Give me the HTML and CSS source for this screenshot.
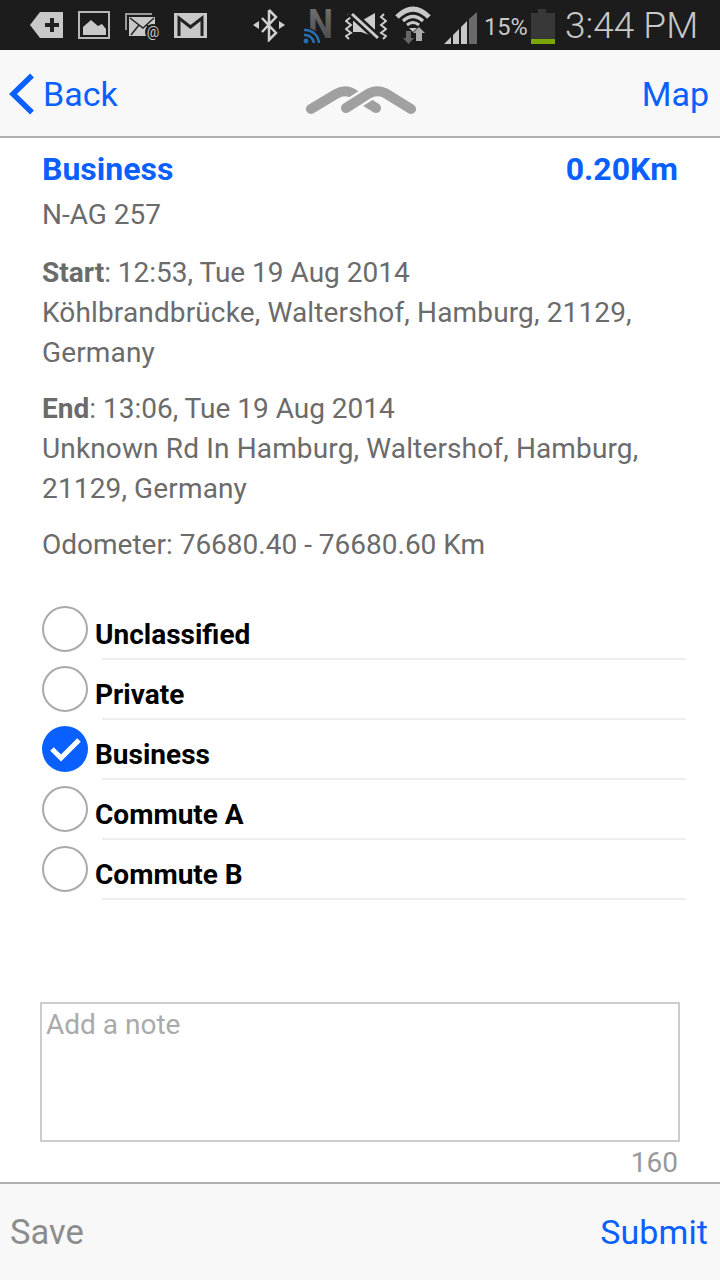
FILE: index.html
```html
<!DOCTYPE html>
<html lang="en">
<head>
    <meta charset="UTF-8">
    <title>Trip details</title>
    <link rel="stylesheet" href="styles.css">
</head>
<body>
    <!-- Status bar -->
    <div class="status-bar">
        <svg class="ic-tag" width="33" height="28" viewBox="0 0 33 28"><path fill="#c8c8c8" d="M0 14 10 1H33V27H10Z"/><path fill="#222" d="M15 12h5V7h4v5h5v4h-5v5h-4v-5h-5z"/></svg>
        <svg class="ic-image" width="32" height="28" viewBox="0 0 32 28"><rect x="1" y="1" width="30" height="26" fill="none" stroke="#b8b8b8" stroke-width="2"/><path fill="#c8c8c8" d="M5 24V16L13 9 20 15 24 13 28 18V24Z"/></svg>
        <svg class="ic-mail" width="36" height="30" viewBox="0 0 36 30">
            <path fill="none" stroke="#999" stroke-width="2" d="M1 20V4H27"/>
            <rect x="4" y="7" width="26" height="19" fill="#c8c8c8"/>
            <path fill="none" stroke="#222" stroke-width="1.500" d="M5 8 18 18 29 8M6 25 14 15M29 25 22 15"/>
            <circle cx="28" cy="22" r="8" fill="#1c1c1c"/>
            <text x="28" y="27" class="mail-at">@</text>
        </svg>
        <svg class="ic-gmail" width="33" height="25" viewBox="0 0 33 25"><rect width="33" height="25" fill="#c8c8c8"/><path fill="none" stroke="#222" stroke-width="3" d="M5 23V5L16.500 14 28 5V23"/></svg>
        <svg class="ic-bt" width="32" height="34" viewBox="0 0 32 34"><path fill="none" stroke="#d0d0d0" stroke-width="2.500" d="M16 2V32L23 25 9 10M16 2 23 9 9 24"/><path fill="#d0d0d0" d="M0 17 6 13V21ZM32 17 26 13V21Z"/></svg>
        <svg class="ic-nfc" width="36" height="50" viewBox="0 0 36 50">
            <defs><linearGradient id="nfcGrad" x1="0" y1="0" x2="0" y2="1"><stop offset="0" stop-color="#777"/><stop offset="1" stop-color="#444"/></linearGradient></defs>
            <text x="5" y="38" class="nfc-letter" fill="url(#nfcGrad)" textLength="25" lengthAdjust="spacingAndGlyphs">N</text>
            <path fill="none" stroke="#1c1c1c" stroke-width="7" d="M1 31A13 13 0 0 1 15 43"/>
            <path fill="none" stroke="#2a6fb0" stroke-width="2.500" d="M1 30A14 14 0 0 1 16 43M1 35A9 9 0 0 1 11 43"/>
            <circle cx="3" cy="41" r="2.400" fill="#2a6fb0"/>
        </svg>
        <svg class="ic-mute" width="42" height="32" viewBox="0 0 42 32">
            <path fill="none" stroke="#ccc" stroke-width="2" d="M3 5 6 8 1 12 6 16 1 20 6 24 1 27 4 30M39 5 36 8 41 12 36 16 41 20 36 24 41 27 38 30"/>
            <path fill="#ccc" d="M8 12H16L30 4V28L16 23H8Z"/>
            <path stroke="#1c1c1c" stroke-width="8" d="M5 3 35 31"/>
            <path stroke="#ccc" stroke-width="3" d="M7 5 33 29"/>
        </svg>
        <svg class="ic-wifi" width="36" height="38" viewBox="0 0 36 38">
            <path fill="none" stroke="#c8c8c8" stroke-width="5" d="M2 11Q18-5 34 11"/>
            <path fill="none" stroke="#c8c8c8" stroke-width="3.500" d="M8 15Q18 6 28 15"/>
            <path fill="none" stroke="#c8c8c8" stroke-width="3" d="M12 19Q18 14 24 19"/>
            <path fill="#c8c8c8" d="M14 22H22L18 26Z"/>
            <path fill="#666" d="M11 25H16V32H19L13.500 38 8 32H11Z"/>
            <path fill="#aaa" d="M21 35V27H18L24 21 30 27H27V35Z"/>
        </svg>
        <svg class="ic-signal" width="34" height="34" viewBox="0 0 34 34"><path fill="#c8c8c8" d="M0 33 7 26V33ZM9 33V24L15 18V33ZM17 33V16L23 10V33Z"/><path fill="#6a6a6a" d="M25 33V8L33 1V33Z"/></svg>
        <span class="battery-pct">15%</span>
        <svg class="ic-battery" width="24" height="36" viewBox="0 0 24 36"><path fill="#383838" d="M7 0H15V4H24V30H0V4H7Z"/><rect y="30" width="24" height="5" fill="#7ba60a"/></svg>
        <span class="clock">3:44 PM</span>
    </div>

    <!-- Navigation -->
    <div class="nav-bar">
        <a class="nav-link back-link">
            <svg width="26" height="42" viewBox="0 0 26 42"><path fill="none" stroke="#0a60ff" stroke-width="5.500" d="M23 2.500 4 21 23 39.500"/></svg>
            Back
        </a>
        <svg class="logo" width="110" height="44" viewBox="306 72 110 44">
            <path class="logo-arc" d="M311 109 336 94Q344 89 352 93L376 108"/>
            <path class="logo-gap" d="M346 108 368 94Q376 89 385 93L408 107"/>
            <path class="logo-arc" d="M346 108 368 94Q376 89 385 93L411 109"/>
        </svg>
        <a class="nav-link map-link">Map</a>
    </div>

    <div class="content">
        <div class="trip-head">
            <span>Business</span>
            <span>0.20Km</span>
        </div>
        <p class="plate">N-AG 257</p>
        <p class="trip-info first"><strong>Start</strong>: 12:53, Tue 19 Aug 2014<br><span class="address">Köhlbrandbrücke, Waltershof, Hamburg, 21129, Germany</span></p>
        <p class="trip-info"><strong>End</strong>: 13:06, Tue 19 Aug 2014<br><span class="address">Unknown Rd In Hamburg, Waltershof, Hamburg, 21129, Germany</span></p>
        <p class="trip-info">Odometer: 76680.40 - 76680.60 Km</p>

        <div class="class-list">
            <div class="class-row"><span class="radio"></span><span class="class-label">Unclassified</span></div>
            <div class="class-row"><span class="radio"></span><span class="class-label">Private</span></div>
            <div class="class-row">
                <span class="radio checked"><svg width="46" height="46" viewBox="0 0 46 46"><path fill="none" stroke="#fff" stroke-width="5" d="M10 23 19 32 37 14"/></svg></span>
                <span class="class-label">Business</span>
            </div>
            <div class="class-row"><span class="radio"></span><span class="class-label">Commute A</span></div>
            <div class="class-row"><span class="radio"></span><span class="class-label">Commute B</span></div>
        </div>

        <textarea class="note" placeholder="Add a note"></textarea>
        <div class="counter">160</div>
    </div>

    <!-- Footer -->
    <div class="bottom-bar">
        <a class="save-link">Save</a>
        <a class="nav-link submit-link">Submit</a>
    </div>
</body>
</html>
```

FILE: styles.css
```css
* {
    box-sizing: border-box;
}
body {
    margin: 0;
    width: 720px;
    height: 1280px;
    display: flex;
    flex-direction: column;
    font-family: Roboto, "Liberation Sans", sans-serif;
    background: #fff;
    overflow: hidden;
}
.status-bar {
    height: 50px;
    flex: none;
    background: #1c1c1c;
    display: flex;
    align-items: center;
    color: #c8c8c8;
}
.status-bar svg {
    flex: none;
}
.ic-tag { margin-left: 30px; }
.ic-image { margin-left: 15px; }
.ic-mail { margin-left: 15px; }
.ic-gmail { margin-left: 13px; }
.ic-bt { margin-left: 46px; }
.ic-nfc { margin-left: 18px; }
.ic-mute { margin-left: 6px; }
.ic-wifi { margin-left: 8px; }
.ic-signal { margin-left: 13px; margin-top: 5px; }
.nfc-letter {
    font-family: Roboto, sans-serif;
    font-weight: 700;
    font-size: 40px;
}
.mail-at {
    font-family: Roboto, sans-serif;
    font-size: 14px;
    fill: #c8c8c8;
    text-anchor: middle;
}
.battery-pct {
    font-size: 23.500px;
    margin-left: 6px;
    margin-top: 3px;
    width: 44px;
}
.ic-battery { margin-left: 3px; margin-top: 4px; }
.clock {
    font-size: 37px;
    font-weight: 300;
    margin-left: 10px;
    white-space: nowrap;
}
.nav-bar {
    height: 88px;
    flex: none;
    background: #f8f8f8;
    border-bottom: 2px solid #b0b0b0;
    display: grid;
    grid-template-columns: 1fr auto 1fr;
    align-items: center;
    padding: 2px 11px 0 9px;
}
.nav-link {
    font-size: 34px;
    color: #0a60ff;
}
.back-link {
    display: flex;
    align-items: center;
    gap: 8px;
}
.map-link {
    justify-self: end;
}
.logo {
    margin-left: 4px;
}
.logo-arc {
    fill: none;
    stroke: #a0a0a0;
    stroke-width: 10;
    stroke-linecap: round;
}
.logo-gap {
    fill: none;
    stroke: #f8f8f8;
    stroke-width: 15;
}
.content {
    flex: 1;
    min-height: 0;
    padding: 11px 42px 0;
    color: #6b6b6b;
    font-size: 28px;
    line-height: 40px;
}
.trip-head {
    display: flex;
    justify-content: space-between;
    font-size: 32px;
    font-weight: 700;
    color: #0a60ff;
}
.plate {
    margin: 6px 0 0;
}
.trip-info {
    margin: 16px 0 0;
}
.trip-info.first {
    margin-top: 18px;
}
.address {
    letter-spacing: 0.14px;
}
.class-list {
    margin: 35px -8px 0 0;
}
.class-row {
    height: 60px;
    display: flex;
    align-items: flex-start;
    padding-top: 6px;
}
.radio {
    width: 46px;
    height: 46px;
    flex: none;
    border: 2px solid #aaa;
    border-radius: 50%;
    background: #fff;
}
.radio.checked {
    border: none;
    background: #0a60ff;
}
.class-label {
    flex: 1;
    margin-top: 6px;
    margin-left: 7px;
    height: 48px;
    color: #000;
    font-weight: 700;
    font-size: 28px;
    line-height: 46px;
    position: relative;
}
.class-label::after {
    content: "";
    position: absolute;
    left: 7px;
    right: 0;
    bottom: 0;
    height: 2px;
    background: #eee;
}
.note {
    display: block;
    width: 640px;
    height: 140px;
    margin: 102px 0 0 -2px;
    padding: 3px 4px;
    border: 2px solid #ccc;
    border-radius: 0;
    outline: none;
    resize: none;
    font-family: inherit;
    font-size: 28px;
    line-height: 36px;
    background: #fff;
}
.note::placeholder {
    color: #aaa;
}
.counter {
    padding-top: 1px;
    text-align: right;
    color: #999;
}
.bottom-bar {
    height: 98px;
    flex: none;
    background: #f8f8f8;
    border-top: 2px solid #b0b0b0;
    display: flex;
    align-items: center;
    justify-content: space-between;
    padding: 0 12px 0 10px;
}
.submit-link {
    letter-spacing: 0.1px;
}
.save-link {
    font-size: 34.500px;
    color: #8c8c8c;
}
```
